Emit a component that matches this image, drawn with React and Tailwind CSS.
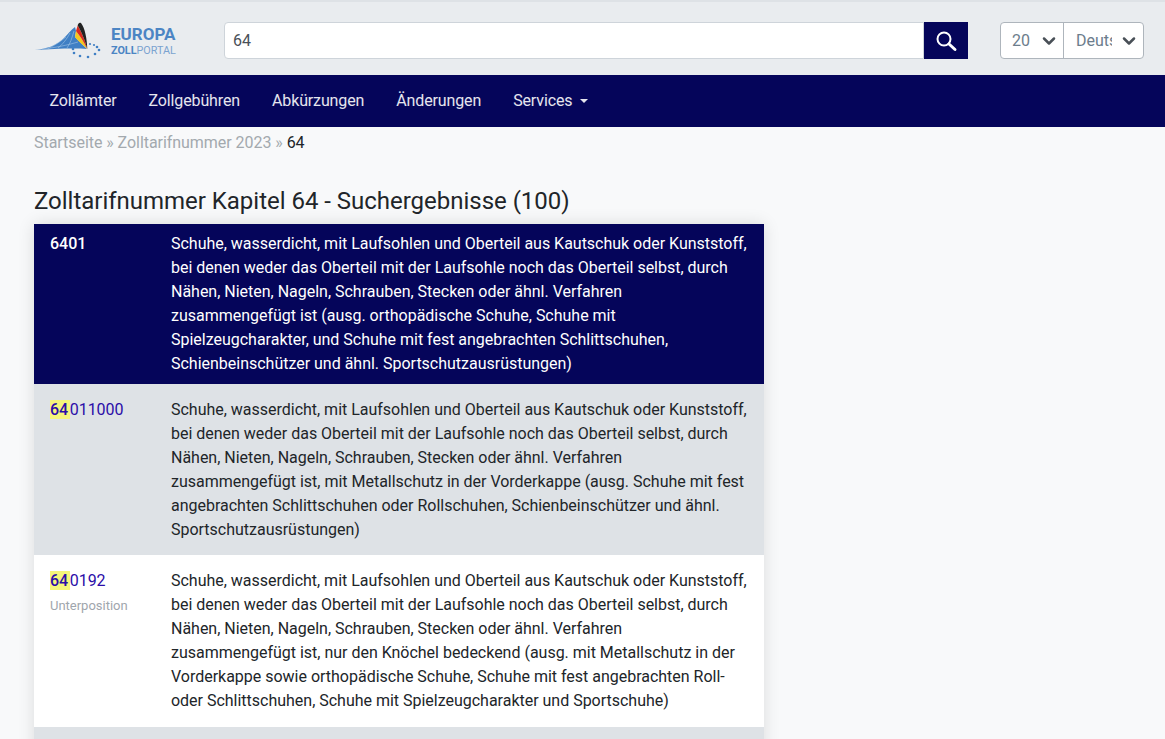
import React from 'react';
import { ChevronDown } from 'lucide-react';

const navItems = ['Zollämter', 'Zollgebühren', 'Abkürzungen', 'Änderungen'];

const Logo = () => (
  <svg width="72" height="40" viewBox="0 0 72 40" className="block">
    <path d="M1 29 C12 28 22 25 30 17 C34 13 38 8 41 6 L42 10 L41 16 L53 28 C40 27 18 28 1 29 Z" fill="#3f7fc4" />
    <path d="M14 27.5 C20 25 27 20 32 16 M24 27 C28 24 33 18 36 12 M33 27 C36 23 38 17 40 10 M8 28 C20 27 34 24 44 21" stroke="#b5d0ea" strokeWidth="0.5" fill="none" />
    <path d="M53.3 28 C49 24 44 20 41 16 L42 10 C46 15 50 21 53.3 28 Z" fill="#f4c81e" />
    <path d="M53.3 28 C50 21 46 15 42 10 L43.7 4.5 C47 10 51 19 53.3 28 Z" fill="#d92b20" />
    <path d="M53.3 28 C53 18 51 7 47 2 C45 1 44 3 43.7 4.5 C47 10 51 19 53.3 28 Z" fill="#222222" />
    <g fill="#3f7fc4">
      <circle cx="39" cy="28" r="1.3" />
      <circle cx="40" cy="32" r="1.3" />
      <circle cx="46" cy="35" r="1.3" />
      <circle cx="54" cy="36" r="1.3" />
      <circle cx="61" cy="33" r="1.3" />
      <circle cx="65" cy="29" r="1.3" />
      <circle cx="63" cy="26" r="1.3" />
      <circle cx="60" cy="24" r="1.1" />
      <circle cx="56" cy="23" r="1.1" />
    </g>
  </svg>
);

const Code = ({ rest, note }) => (
  <div className="w-[121px] shrink-0">
    <div className="text-[#2b0da8]">
      <span className="bg-[#f5f57a] pr-[1.5px] font-medium">64</span>
      {rest}
    </div>
    {note && <div className="text-[13px] leading-[26px] text-[#9fa6ad]">{note}</div>}
  </div>
);

const App = () => (
  <div className="h-screen overflow-hidden bg-[#f8f9fa] font-['Roboto',sans-serif] text-base leading-6 text-[#212529]">
    <header className="flex h-[75px] items-center border-t-2 border-[#dee2e6] bg-[#e9ecef] pl-[34px] pt-[4px]">
      <div className="flex w-[190px] shrink-0 items-center">
        <Logo />
        <div className="ml-[5px] text-[#4c85c4]">
          <div className="text-[17px] font-bold leading-[19px]">EUROPA</div>
          <div className="text-[10.8px] leading-[13px]">
            <span className="font-bold">ZOLL</span>
            <span className="text-[#7ba3d0]">PORTAL</span>
          </div>
        </div>
      </div>
      <div className="flex h-[37px] w-[744px] shrink-0">
        <input
          readOnly
          value="64"
          className="min-w-0 flex-1 rounded-l border border-[#ced4da] bg-white px-2 text-[#495057] outline-none"
        />
        <button className="flex w-[44px] items-center justify-center bg-[#05055a]">
          <svg width="24" height="24" viewBox="0 0 24 24" fill="none" stroke="white">
            <circle cx="10" cy="10" r="6.5" strokeWidth="2" />
            <path d="M15 15 L21 20.5" strokeWidth="3" strokeLinecap="round" />
          </svg>
        </button>
      </div>
      <div className="ml-[32px] flex h-[37px] w-[144px] rounded border border-[#aeb5bc] bg-white text-[#6c7d8c]">
        <div className="flex w-[63px] items-center justify-between border-r border-[#aeb5bc] pl-[11px] pr-[4px]">
          <span>20</span>
          <ChevronDown size={20} strokeWidth={3} className="text-[#495057]" />
        </div>
        <div className="flex flex-1 items-center justify-between pl-[12px] pr-[4px]">
          <span className="w-[36px] overflow-hidden">Deutsch</span>
          <ChevronDown size={20} strokeWidth={3} className="text-[#495057]" />
        </div>
      </div>
    </header>

    <nav className="flex h-[52px] items-center gap-8 bg-[#05055a] pl-[49.5px] tracking-[-0.13px] text-white/90">
      {navItems.map((item) => (
        <a key={item}>{item}</a>
      ))}
      <a className="flex items-center">
        Services
        <span className="ml-[8px] border-x-[4px] border-t-[4px] border-x-transparent border-t-white/90" />
      </a>
    </nav>

    <main className="pl-[34px]">
      <div className="pt-[4px] tracking-[-0.05px] text-[#a3a9ae]">
        Startseite » Zolltarifnummer 2023 » <span className="text-[#212529]">64</span>
      </div>
      <h1 className="mt-[31px] text-2xl leading-[30px] tracking-[-0.02px] text-[#212529]">
        Zolltarifnummer Kapitel 64 - Suchergebnisse (100)
      </h1>
      <div className="mt-[8px] w-[730px] tracking-[-0.012px] shadow-[0_0_16px_rgba(0,0,0,0.12)]">
        <div className="flex bg-[#05055a] py-2 pl-4 pr-4 text-white">
          <div className="w-[121px] shrink-0 font-medium">6401</div>
          <div>
            Schuhe, wasserdicht, mit Laufsohlen und Oberteil aus Kautschuk oder Kunststoff, bei denen weder das
            Oberteil mit der Laufsohle noch das Oberteil selbst, durch Nähen, Nieten, Nageln, Schrauben, Stecken oder
            ähnl. Verfahren zusammengefügt ist (ausg. orthopädische Schuhe, Schuhe mit Spielzeugcharakter, und Schuhe
            mit fest angebrachten Schlittschuhen, Schienbeinschützer und ähnl. Sportschutzausrüstungen)
          </div>
        </div>
        <div className="flex h-[171px] bg-[#dee2e6] pl-4 pr-4 pt-[14px]">
          <Code rest="011000" />
          <div>
            Schuhe, wasserdicht, mit Laufsohlen und Oberteil aus Kautschuk oder Kunststoff, bei denen weder das
            Oberteil mit der Laufsohle noch das Oberteil selbst, durch Nähen, Nieten, Nageln, Schrauben, Stecken oder
            ähnl. Verfahren zusammengefügt ist, mit Metallschutz in der Vorderkappe (ausg. Schuhe mit fest
            angebrachten Schlittschuhen oder Rollschuhen, Schienbeinschützer und ähnl. Sportschutzausrüstungen)
          </div>
        </div>
        <div className="flex h-[172px] bg-white pl-4 pr-4 pt-[14px]">
          <Code rest="0192" note="Unterposition" />
          <div>
            Schuhe, wasserdicht, mit Laufsohlen und Oberteil aus Kautschuk oder Kunststoff, bei denen weder das
            Oberteil mit der Laufsohle noch das Oberteil selbst, durch Nähen, Nieten, Nageln, Schrauben, Stecken oder
            ähnl. Verfahren zusammengefügt ist, nur den Knöchel bedeckend (ausg. mit Metallschutz in der Vorderkappe
            sowie orthopädische Schuhe, Schuhe mit fest angebrachten Roll- oder Schlittschuhen, Schuhe mit
            Spielzeugcharakter und Sportschuhe)
          </div>
        </div>
        <div className="h-[60px] bg-[#dee2e6]" />
      </div>
    </main>
  </div>
);

export default App;
